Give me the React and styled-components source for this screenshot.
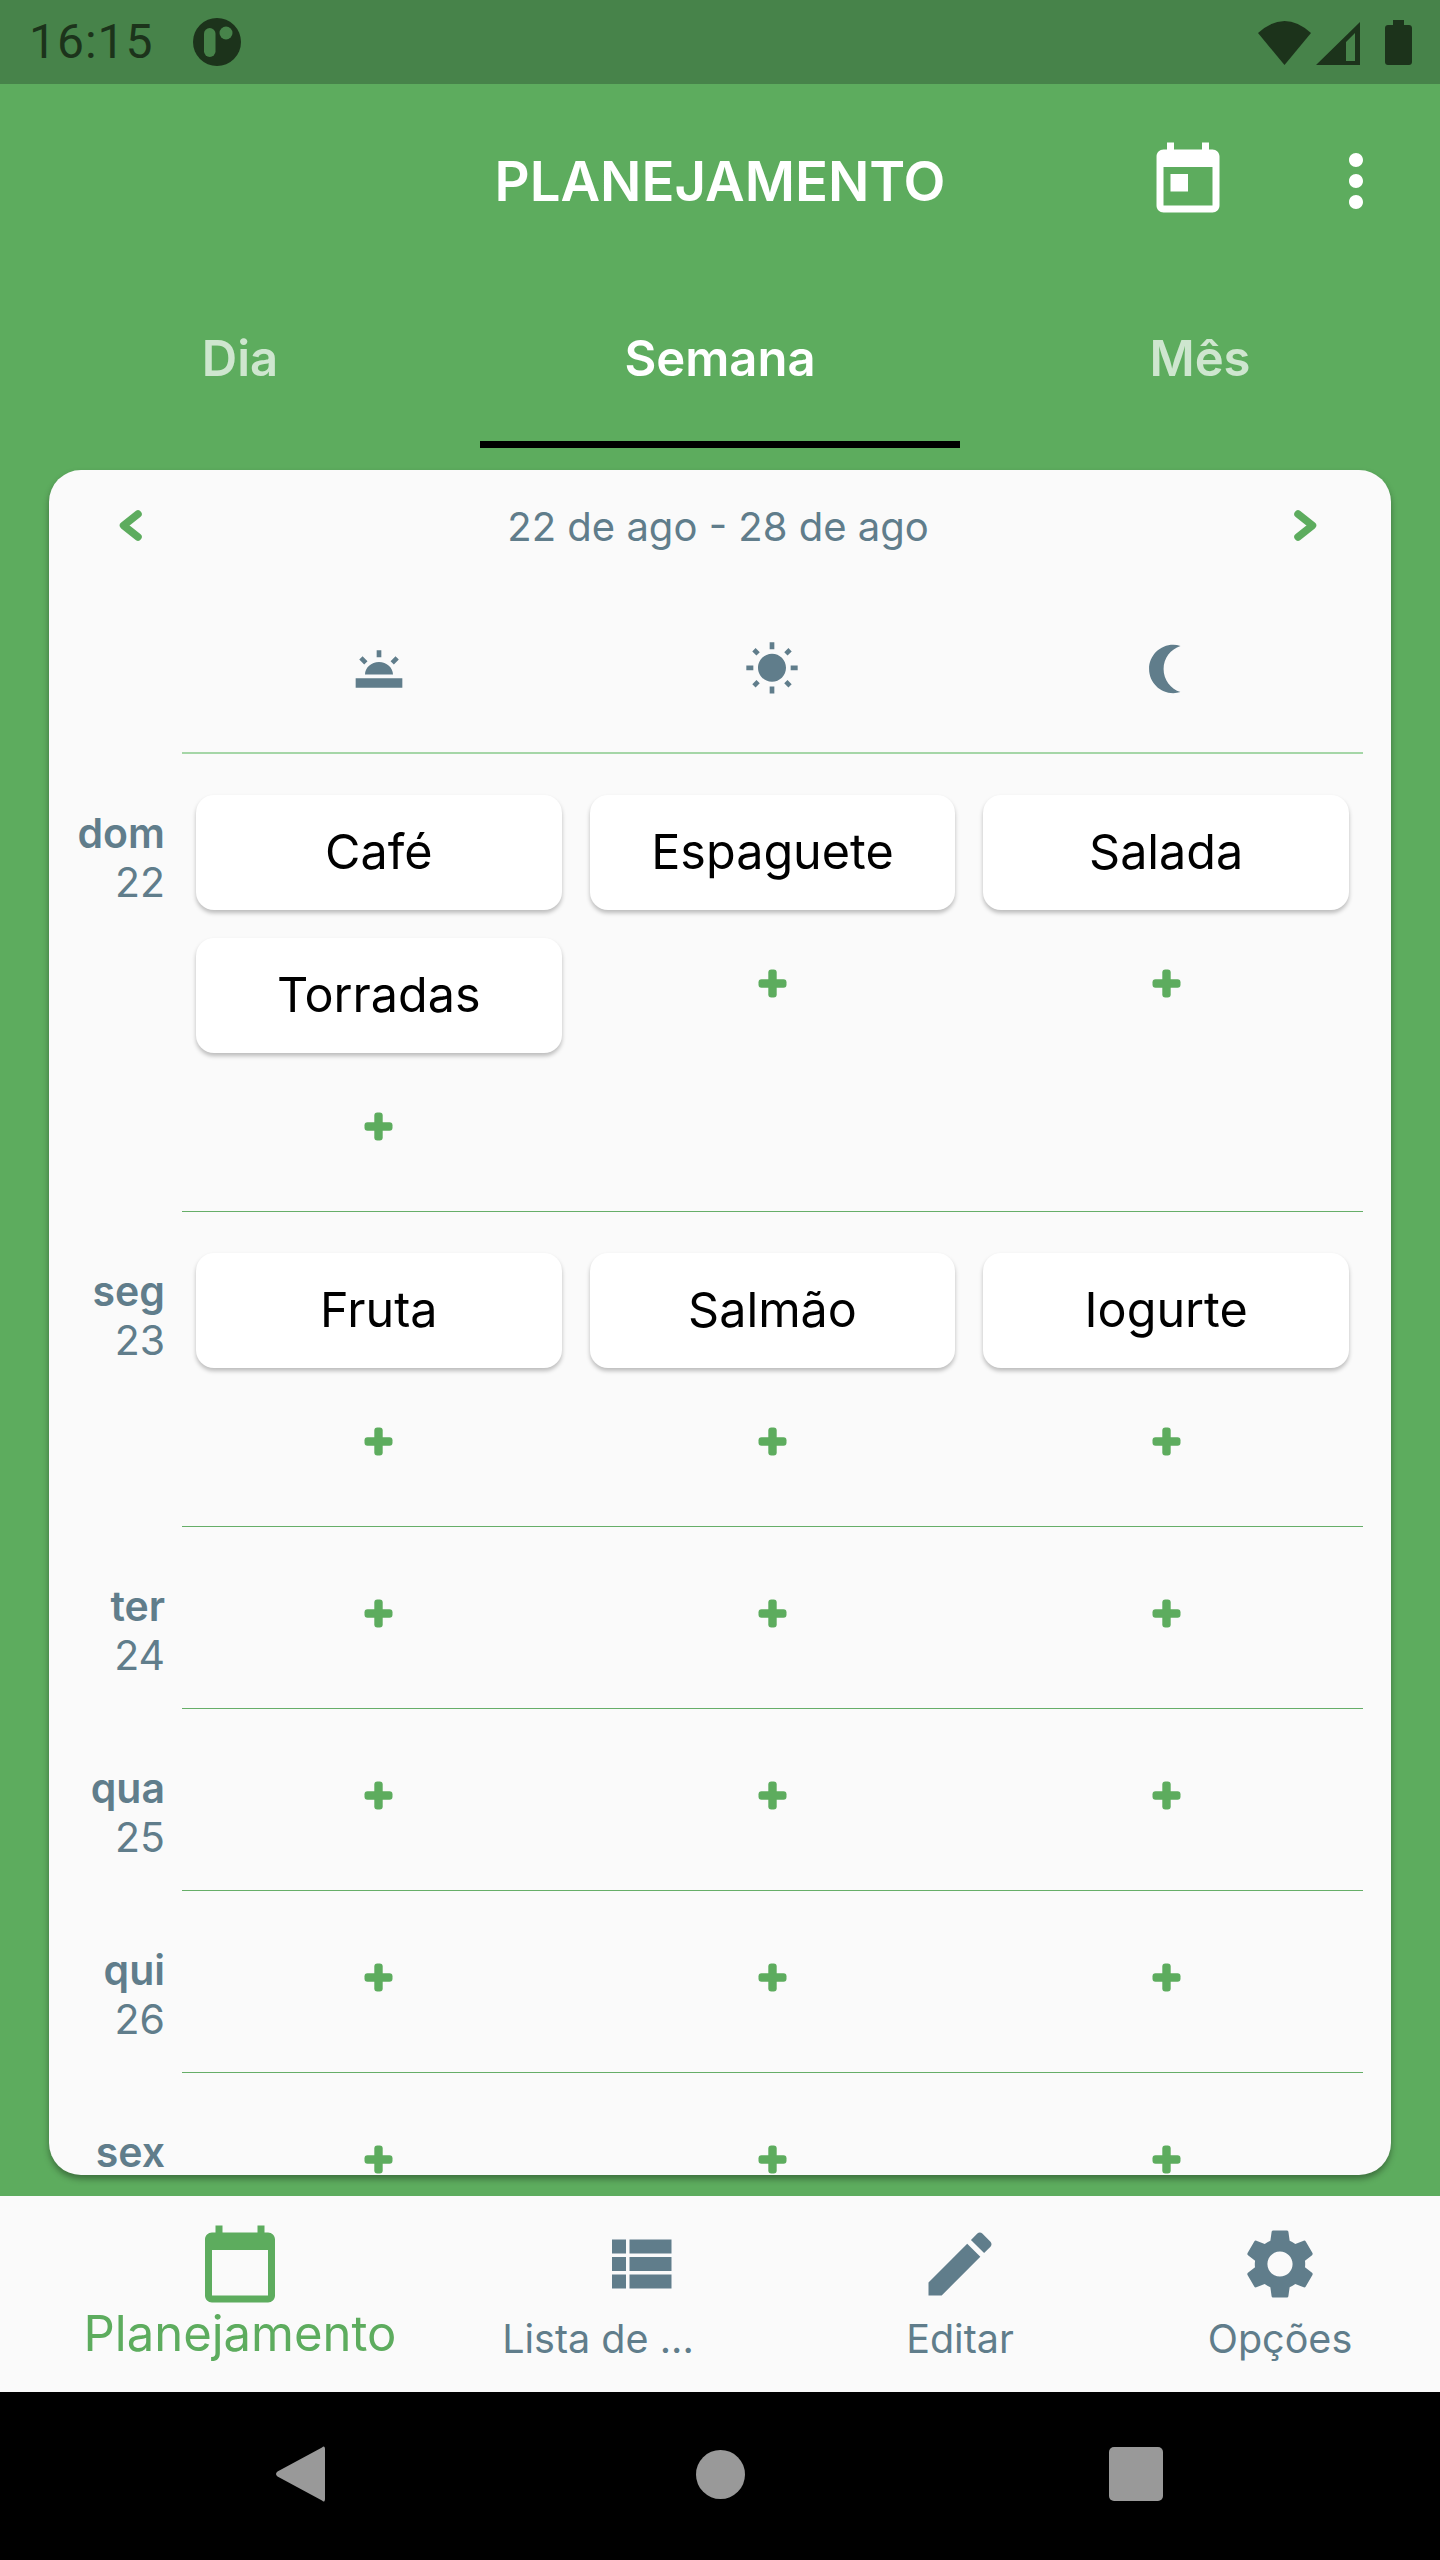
import React from "react";
import styled, { createGlobalStyle } from "styled-components";

const green = "#5dac5e";
const slate = "#607d8b";
const ink = "#1c331b";

const GlobalStyle = createGlobalStyle`
  html, body {
    margin: 0;
    padding: 0;
    background: #000;
  }
  * {
    box-sizing: border-box;
  }
`;

const paths = {
  today: "M19 3h-1V1h-2v2H8V1H6v2H5c-1.11 0-1.99.9-1.99 2L3 19c0 1.1.89 2 2 2h14c1.1 0 2-.9 2-2V5c0-1.1-.9-2-2-2zm0 16H5V8h14v11zM7 10h5v5H7z",
  moreVert: "M12 8c1.1 0 2-.9 2-2s-.9-2-2-2-2 .9-2 2 .9 2 2 2zm0 2c-1.1 0-2 .9-2 2s.9 2 2 2 2-.9 2-2-.9-2-2-2zm0 6c-1.1 0-2 .9-2 2s.9 2 2 2 2-.9 2-2-.9-2-2-2z",
  calendar: "M20 3h-1V1h-2v2H7V1H5v2H4c-1.1 0-2 .9-2 2v16c0 1.1.9 2 2 2h16c1.1 0 2-.9 2-2V5c0-1.1-.9-2-2-2zm0 18H4V8h16v13z",
  list: "M4 14h4v-4H4v4zm0 5h4v-4H4v4zM4 9h4V5H4v4zm5 5h12v-4H9v4zm0 5h12v-4H9v4zM9 5v4h12V5H9z",
  edit: "M3 17.25V21h3.75L17.81 9.94l-3.75-3.75L3 17.25zM20.71 7.04c.39-.39.39-1.02 0-1.41l-2.34-2.34c-.39-.39-1.02-.39-1.41 0l-1.83 1.83 3.75 3.75 1.83-1.83z",
  settings: "M19.14 12.94c.04-.3.06-.61.06-.94 0-.32-.02-.64-.07-.94l2.03-1.58c.18-.14.23-.41.12-.61l-1.92-3.32c-.12-.22-.37-.29-.59-.22l-2.39.96c-.5-.38-1.03-.7-1.62-.94l-.36-2.54c-.04-.24-.24-.41-.48-.41h-3.84c-.24 0-.43.17-.47.41l-.36 2.54c-.59.24-1.13.57-1.62.94l-2.39-.96c-.22-.08-.47 0-.59.22L2.74 8.87c-.12.21-.08.47.12.61l2.03 1.58c-.05.3-.09.63-.09.94s.02.64.07.94l-2.03 1.58c-.18.14-.23.41-.12.61l1.92 3.32c.12.22.37.29.59.22l2.39-.96c.5.38 1.03.7 1.62.94l.36 2.54c.05.24.24.41.48.41h3.84c.24 0 .44-.17.47-.41l.36-2.54c.59-.24 1.13-.56 1.62-.94l2.39.96c.22.08.47 0 .59-.22l1.92-3.32c.12-.22.07-.47-.12-.61l-2.01-1.58zM12 15.6c-1.98 0-3.6-1.62-3.6-3.6s1.62-3.6 3.6-3.6 3.6 1.62 3.6 3.6-1.62 3.6-3.6 3.6z",
  sunrise: "M16.955 8.662l2.12-2.122 1.416 1.414-2.121 2.122zM2 16h20v4H2zm9-12h2v3h-2zM3.543 7.925l1.414-1.414 2.121 2.121-1.414 1.414zM6 14.4c0-3 2.7-5.4 6-5.4s6 2.4 6 5.4z",
  sun: "M6.76 4.84l-1.8-1.79-1.41 1.41 1.79 1.79 1.42-1.41zM4 10.5H1v2h3v-2zm9-9.95h-2V3.5h2V.55zm7.45 3.91l-1.41-1.41-1.79 1.79 1.41 1.41 1.79-1.79zm-3.21 13.7l1.79 1.8 1.41-1.41-1.8-1.79-1.4 1.4zM20 10.5v2h3v-2h-3zm-8-5c-3.31 0-6 2.69-6 6s2.69 6 6 6 6-2.69 6-6-2.69-6-6-6zm-1 16.95h2V19.5h-2v2.95zm-7.45-3.91l1.41 1.41 1.79-1.8-1.41-1.41-1.79 1.8z",
  moon: "M15 2c1.05 0 2.05.16 3 .46-4.06 1.27-7 5.06-7 9.54 0 4.48 2.94 8.27 7 9.54-.95.3-1.95.46-3 .46-5.52 0-10-4.48-10-10S9.48 2 15 2z",
};

const Icon = ({ name, size, color }) => (
  <svg width={size} height={size} viewBox="0 0 24 24" fill={color} style={{ display: "block" }}>
    <path d={paths[name]} />
  </svg>
);

const week = [
  { day: "dom", date: "22", meals: [["Café", "Torradas"], ["Espaguete"], ["Salada"]] },
  { day: "seg", date: "23", meals: [["Fruta"], ["Salmão"], ["Iogurte"]] },
  { day: "ter", date: "24", meals: [[], [], []] },
  { day: "qua", date: "25", meals: [[], [], []] },
  { day: "qui", date: "26", meals: [[], [], []] },
  { day: "sex", date: "27", meals: [[], [], []] },
];

const App = () => (
  <Screen>
    <GlobalStyle />
    <StatusBar>
      <Clock>16:15</Clock>
      <svg width="48" height="48" viewBox="0 0 48 48">
        <circle cx="24" cy="24" r="24" fill={ink} />
        <rect x="11" y="10" width="11.5" height="29" rx="5.75" fill="#47834a" />
        <circle cx="33" cy="15" r="6.5" fill="#47834a" />
      </svg>
      <StatusIcons>
        <svg width="53" height="44" viewBox="0 0 53 44">
          <path d="M0 12Q26.5 -12 53 12L26.5 44Z" fill={ink} />
        </svg>
        <svg width="44" height="43" viewBox="0 0 44 43">
          <path fillRule="evenodd" d="M44 0V43H0ZM39 11L30 20V39H39Z" fill={ink} />
        </svg>
        <svg width="27" height="45" viewBox="0 0 27 45">
          <path d="M8 0H19V5H24C25.7 5 27 6.3 27 8V42C27 43.7 25.7 45 24 45H3C1.3 45 0 43.7 0 42V8C0 6.3 1.3 5 3 5H8Z" fill={ink} />
        </svg>
      </StatusIcons>
    </StatusBar>

    <Main>
      <AppBar>
        <span />
        <Title>PLANEJAMENTO</Title>
        <Actions>
          <ActionButton><Icon name="today" size={84} color="#fff" /></ActionButton>
          <ActionButton><Icon name="moreVert" size={84} color="#fff" /></ActionButton>
        </Actions>
      </AppBar>

      <Tabs>
        <Tab>Dia</Tab>
        <Tab $active>Semana</Tab>
        <Tab>Mês</Tab>
      </Tabs>

      <Card>
        <WeekNav>
          <svg width="23" height="31" viewBox="0 0 23 31">
            <path d="M19 4L4.5 15.5L19 27" fill="none" stroke={green} strokeWidth="7.5" strokeLinecap="round" strokeLinejoin="round" />
          </svg>
          <DateRange>22 de ago - 28 de ago</DateRange>
          <svg width="23" height="31" viewBox="0 0 23 31">
            <path d="M4 4L18.5 15.5L4 27" fill="none" stroke={green} strokeWidth="7.5" strokeLinecap="round" strokeLinejoin="round" />
          </svg>
        </WeekNav>

        <PeriodRow>
          <Period><Icon name="sunrise" size={56} color={slate} /></Period>
          <Period><Icon name="sun" size={56} color={slate} /></Period>
          <Period><Icon name="moon" size={58} color={slate} /></Period>
        </PeriodRow>

        {week.map((row) => (
          <DayRow key={row.day}>
            <DayLabel>
              <DayName>{row.day}</DayName>
              <DayDate>{row.date}</DayDate>
            </DayLabel>
            <Meals>
              {row.meals.map((items, i) => (
                <MealColumn key={i}>
                  {items.map((item) => (
                    <MealCard key={item}>{item}</MealCard>
                  ))}
                  <AddButton>
                    <svg width="29" height="29" viewBox="0 0 29 29" fill={green}>
                      <rect x="10.3" y="0.5" width="8.4" height="28" rx="3" />
                      <rect x="0.5" y="10.3" width="28" height="8.4" rx="3" />
                    </svg>
                  </AddButton>
                </MealColumn>
              ))}
            </Meals>
          </DayRow>
        ))}
      </Card>
    </Main>

    <BottomNav>
      <NavItem $wide>
        <Icon name="calendar" size={84} color={green} />
        <NavLabel $active>Planejamento</NavLabel>
      </NavItem>
      <NavItem>
        <Icon name="list" size={84} color={slate} />
        <NavLabel $shift={84}>Lista de ...</NavLabel>
      </NavItem>
      <NavItem>
        <Icon name="edit" size={84} color={slate} />
        <NavLabel>Editar</NavLabel>
      </NavItem>
      <NavItem>
        <Icon name="settings" size={84} color={slate} />
        <NavLabel>Opções</NavLabel>
      </NavItem>
    </BottomNav>

    <SystemBar>
      <SystemButton>
        <svg width="57" height="56" viewBox="0 0 57 56">
          <path d="M46 1.5C47.7 -0.5 49 0.5 49 3V53C49 55.5 47.7 56.5 46 54.5L1.5 30.5C-0.5 29 -0.5 27 1.5 25.5Z" fill="#999" />
        </svg>
      </SystemButton>
      <SystemButton>
        <svg width="49" height="49" viewBox="0 0 49 49">
          <circle cx="24.5" cy="24.5" r="24.5" fill="#999" />
        </svg>
      </SystemButton>
      <SystemButton>
        <svg width="54" height="54" viewBox="0 0 54 54">
          <rect width="54" height="54" rx="5" fill="#999" />
        </svg>
      </SystemButton>
    </SystemBar>
  </Screen>
);

export default App;

const Screen = styled.div`
  display: flex;
  flex-direction: column;
  width: 1440px;
  height: 2560px;
  overflow: hidden;
  font-family: Inter, Roboto, sans-serif;
`;

const StatusBar = styled.div`
  display: flex;
  align-items: center;
  gap: 39px;
  flex: none;
  height: 84px;
  padding: 0 28px 0 29px;
  background: #47834a;
`;

const Clock = styled.span`
  font-family: Roboto, sans-serif;
  font-size: 48px;
  line-height: 56px;
  letter-spacing: 1px;
  color: ${ink};
`;

const StatusIcons = styled.div`
  display: flex;
  align-items: flex-end;
  gap: 5px;
  margin-left: auto;

  svg:last-child {
    margin-left: 20px;
  }
`;

const Main = styled.div`
  display: flex;
  flex-direction: column;
  flex: 1;
  min-height: 0;
  padding-bottom: 21px;
  background: ${green};
`;

const AppBar = styled.div`
  display: grid;
  grid-template-columns: 1fr auto 1fr;
  align-items: center;
  flex: none;
  height: 194px;
`;

const Title = styled.h1`
  margin: 0;
  font-size: 54.5px;
  font-weight: 600;
  color: #fff;
`;

const Actions = styled.div`
  display: flex;
  justify-content: flex-end;
`;

const ActionButton = styled.div`
  display: flex;
  justify-content: center;
  width: 168px;
`;

const Tabs = styled.div`
  display: grid;
  grid-template-columns: repeat(3, 1fr);
  flex: none;
  height: 170px;
  margin-bottom: 22px;
`;

const Tab = styled.div`
  display: flex;
  align-items: center;
  justify-content: center;
  padding-bottom: 3px;
  font-size: 49px;
  font-weight: 600;
  color: ${(props) => (props.$active ? "#fff" : "rgba(255, 255, 255, 0.7)")};
  border-bottom: 7px solid ${(props) => (props.$active ? "#000" : "transparent")};
`;

const Card = styled.div`
  flex: 1;
  min-height: 0;
  margin: 0 49px;
  overflow: hidden;
  background: #fafafa;
  border-radius: 32px;
  box-shadow: 0 4px 6px rgba(0, 0, 0, 0.35);
`;

const WeekNav = styled.div`
  display: flex;
  align-items: center;
  justify-content: space-between;
  height: 110px;
  padding: 0 74px 0 70px;
`;

const DateRange = styled.span`
  padding-top: 2px;
  font-size: 40px;
  color: ${slate};
`;

const PeriodRow = styled.div`
  display: grid;
  grid-template-columns: repeat(3, 1fr);
  height: 174px;
  margin: 0 28px 0 133px;
  padding-top: 6px;
  border-bottom: 2px solid #a5d6a7;
`;

const Period = styled.div`
  display: flex;
  align-items: center;
  justify-content: center;
`;

const DayRow = styled.div`
  display: flex;
  padding-right: 28px;
`;

const DayLabel = styled.div`
  flex: none;
  width: 133px;
  padding: 55px 17px 0 0;
  text-align: right;
  line-height: 49px;
  font-size: 41px;
  color: ${slate};
`;

const DayName = styled.div`
  font-weight: 600;
`;

const DayDate = styled.div`
  font-weight: 400;
`;

const Meals = styled.div`
  display: grid;
  grid-template-columns: repeat(3, 1fr);
  flex: 1;
  min-height: 182px;
  padding: 27px 0 26px;
  border-bottom: 1px solid #66ae68;
  align-items: start;
`;

const MealColumn = styled.div`
  display: flex;
  flex-direction: column;
  padding: 0 14px;
`;

const MealCard = styled.div`
  display: flex;
  align-items: center;
  justify-content: center;
  height: 115px;
  margin: 14px 0;
  padding-bottom: 2px;
  font-size: 48.5px;
  color: #000;
  background: #fff;
  border-radius: 18px;
  box-shadow: 0 3px 4px rgba(0, 0, 0, 0.25);
`;

const AddButton = styled.div`
  display: flex;
  align-items: center;
  justify-content: center;
  height: 118px;
`;

const BottomNav = styled.div`
  display: flex;
  flex: none;
  height: 196px;
  background: #fafafa;
`;

const NavItem = styled.div`
  display: flex;
  flex-direction: column;
  align-items: center;
  flex: none;
  width: ${(props) => (props.$wide ? "480px" : "320px")};
  padding-top: 26px;
`;

const NavLabel = styled.span`
  margin-top: ${(props) => (props.$active ? "3px" : "8px")};
  margin-right: ${(props) => props.$shift || 0}px;
  font-size: ${(props) => (props.$active ? "49px" : "39.5px")};
  line-height: 50px;
  color: ${(props) => (props.$active ? green : slate)};
`;

const SystemBar = styled.div`
  display: flex;
  justify-content: center;
  align-items: center;
  flex: none;
  height: 168px;
  padding-bottom: 4px;
  background: #000;
`;

const SystemButton = styled.div`
  display: flex;
  justify-content: center;
  width: 416px;
`;
